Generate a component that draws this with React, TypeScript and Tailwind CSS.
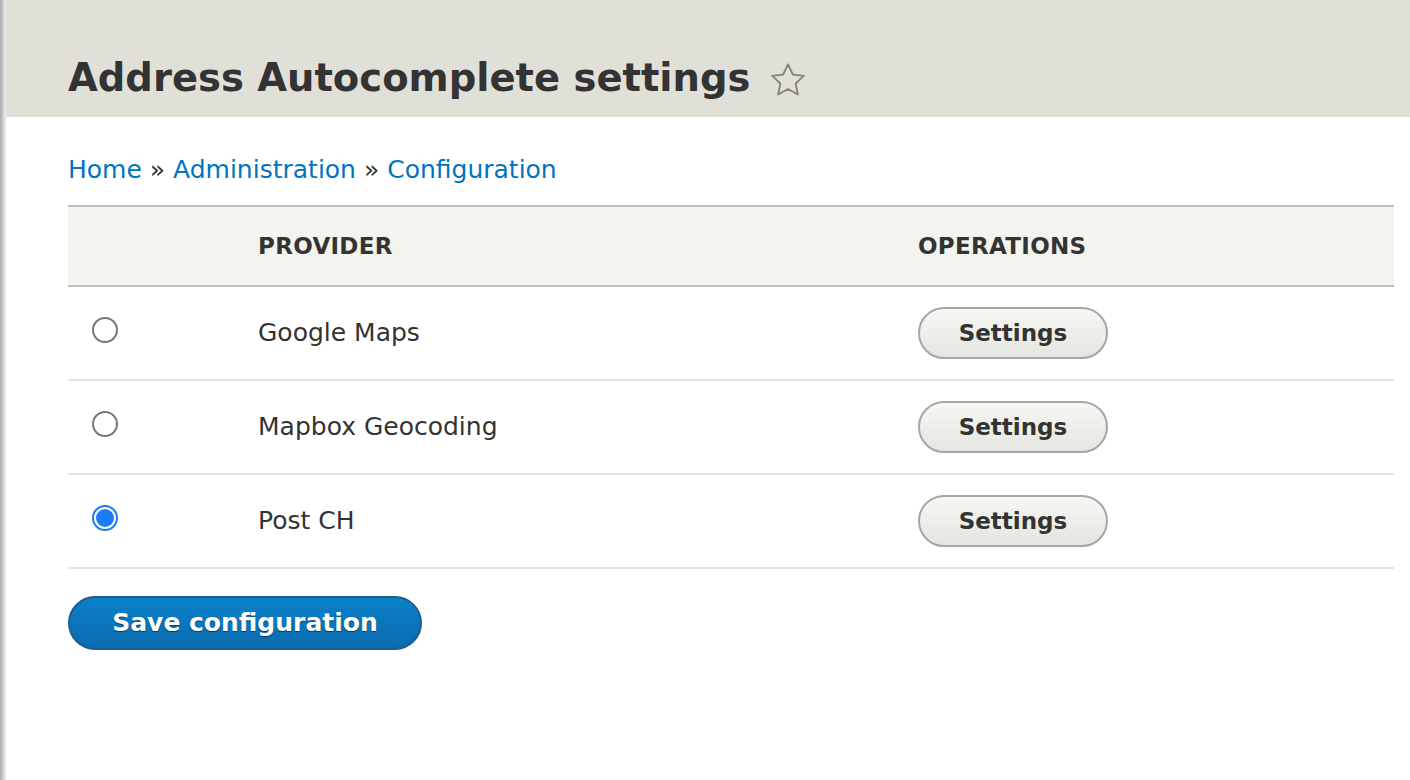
const rows = [
  { name: 'Google Maps', checked: false },
  { name: 'Mapbox Geocoding', checked: false },
  { name: 'Post CH', checked: true },
];

function Star() {
  return (
    <svg width="40" height="40" viewBox="0 0 24 24" className="ml-[18px] mt-[2px]">
      <path
        d="M12 2.6l2.9 6.1 6.6.8-4.9 4.6 1.3 6.6L12 17.4l-5.9 3.3 1.3-6.6-4.9-4.6 6.6-.8z"
        fill="none"
        stroke="#868473"
        strokeWidth="1.1"
        strokeLinejoin="round"
      />
    </svg>
  );
}

function Radio({ checked }: { checked: boolean }) {
  if (checked) {
    return (
      <span className="flex h-[26px] w-[26px] items-center justify-center rounded-full border-[2px] border-[#1b7cf5] bg-white">
        <span className="h-[18px] w-[18px] rounded-full bg-[#1b7cf5]" />
      </span>
    );
  }
  return <span className="block h-[26px] w-[26px] rounded-full border-[2px] border-[#777] bg-white" />;
}

export default function App() {
  return (
    <div
      className="flex min-h-[780px] bg-white text-[#333]"
      style={{ fontFamily: '"DejaVu Sans", "Noto Sans", sans-serif' }}
    >
      <div className="w-[6px] shrink-0 bg-gradient-to-r from-[#a9a9a9] to-[#f2f2f2]" />
      <div className="flex-1">
        {/* Header */}
        <div className="flex h-[117px] items-center bg-[#e0e0d8] pl-[62px] pt-[40px]">
          <h1 className="text-[38.5px] font-bold leading-none text-[#333]">
            Address Autocomplete settings
          </h1>
          <Star />
        </div>

        <div className="pl-[62px] pr-[16px]">
          {/* Breadcrumb */}
          <nav className="mt-[38px] text-[25px] leading-[30px] text-[#333]">
            <a className="text-[#0074bd]">Home</a> »{' '}
            <a className="text-[#0074bd]">Administration</a> »{' '}
            <a className="text-[#0074bd]">Configuration</a>
          </nav>

          {/* Table */}
          <table className="mt-[20px] w-full border-collapse">
            <thead>
              <tr className="h-[80px] border-y-2 border-[#bebfb9] bg-[#f3f4ee]">
                <th className="w-[190px]" />
                <th className="w-[660px] text-left text-[23px] font-bold tracking-[0.3px] text-[#333]">PROVIDER</th>
                <th className="text-left text-[23px] font-bold tracking-[0.3px] text-[#333]">OPERATIONS</th>
              </tr>
            </thead>
            <tbody>
              {rows.map((row) => (
                <tr key={row.name} className="h-[94px] border-b-2 border-[#e6e4df]">
                  <td className="pl-[24px] align-middle">
                    <div className="-mt-[6px]">
                      <Radio checked={row.checked} />
                    </div>
                  </td>
                  <td className="text-[25px] text-[#333]">{row.name}</td>
                  <td>
                    <button className="h-[52px] w-[190px] rounded-full border-2 border-[#a6a6a6] bg-gradient-to-b from-[#f6f6f3] to-[#e6e6e0] text-[23px] font-bold text-[#333]">
                      Settings
                    </button>
                  </td>
                </tr>
              ))}
            </tbody>
          </table>

          <button className="mt-[27px] h-[54px] w-[354px] rounded-full border-2 border-[#1e5c90] bg-gradient-to-b from-[#0a81c9] to-[#0a6bb0] text-[25px] font-bold text-white [text-shadow:0_1px_1px_rgba(0,0,0,0.5)]">
            Save configuration
          </button>
        </div>
      </div>
    </div>
  );
}
